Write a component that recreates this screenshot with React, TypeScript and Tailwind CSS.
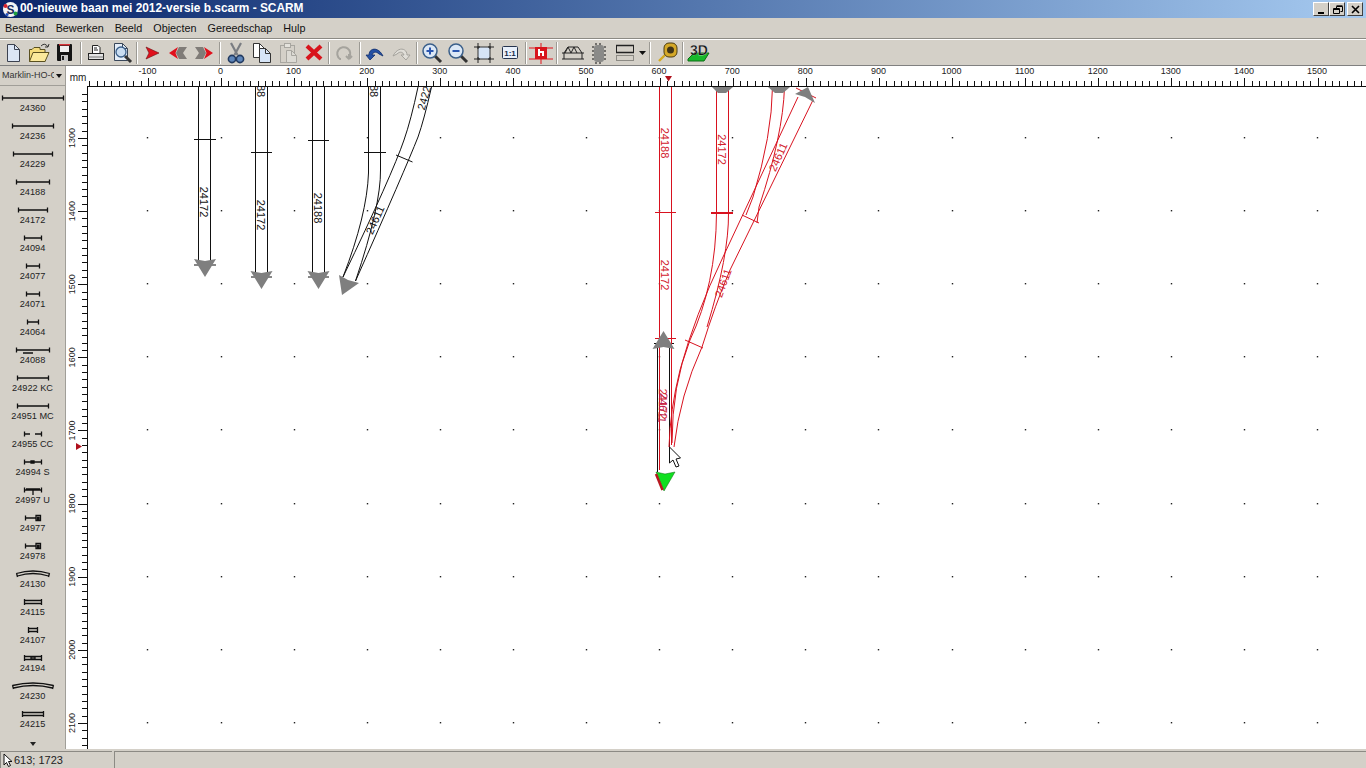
import React from 'react';

const FONT = "font-['Liberation_Sans',Arial,sans-serif]";
const RED = '#d8121f';
const GRAY = '#7f7f7f';

// palette shape helpers
const bar = (a: number, b: number) => `M${a} 1.5V6.5M${b} 1.5V6.5M${a} 4H${b}`;
const twin = (a: number, b: number) => `M${a} 1V7M${b} 1V7M${a} 2.5H${b}M${a} 5.5H${b}`;
const arc = (a: number, b: number) =>
  `M${a} 3L${a + 1} 7M${b} 3L${b - 1} 7M${a} 3.5Q33 -1.5 ${b} 3.5M${a + 1} 6Q33 1 ${b - 1} 6`;

const paletteItems = [
  { label: '24360', d: bar(2.5, 63.5) },
  { label: '24236', d: bar(12.5, 53.5) },
  { label: '24229', d: bar(13.5, 52.5) },
  { label: '24188', d: bar(16.5, 49.5) },
  { label: '24172', d: bar(18.5, 47.5) },
  { label: '24094', d: bar(24.5, 41.5) },
  { label: '24077', d: bar(26.5, 39.5) },
  { label: '24071', d: bar(26.5, 39.5) },
  { label: '24064', d: bar(27.5, 38.5) },
  { label: '24088', d: bar(16.5, 49.5) + 'M23 7H33' },
  { label: '24922 KC', d: bar(17.5, 48.5) },
  { label: '24951 MC', d: bar(17.5, 48.5) },
  { label: '24955 CC', d: 'M24.5 1.5V6.5M41.5 1.5V6.5M24.5 4H30M35 4H41.5' },
  { label: '24994 S', d: bar(24.5, 41.5) + 'M31 3H34V5H31Z' },
  { label: '24997 U', d: bar(24.5, 41.5) + 'M26 3H40M33 4V9' },
  { label: '24977', d: bar(25.5, 36) + 'M36 1.5H40.5V6.5H36ZM37.5 3.5H39V5H37.5Z' },
  { label: '24978', d: bar(25.5, 36) + 'M36 1.5H40.5V6.5H36ZM37.5 3.5H39V5H37.5Z' },
  { label: '24130', d: arc(16.5, 49.5) },
  { label: '24115', d: twin(24.5, 41.5) },
  { label: '24107', d: twin(28.5, 37.5) },
  { label: '24194', d: twin(24.5, 41.5) + 'M31 3H35V5H31Z' },
  { label: '24230', d: arc(12.5, 53.5) },
  { label: '24215', d: twin(22.5, 43.5) },
];

const menus = ['Bestand', 'Bewerken', 'Beeld', 'Objecten', 'Gereedschap', 'Hulp'];

const Sep = ({ className }: { className: string }) => (
  <div className={`flex justify-center h-full items-center ${className}`}>
    <div className="h-[22px] w-[2px] border-l border-r border-l-[#9c9a94] border-r-white" />
  </div>
);

const Btn = ({ children }: { children: React.ReactNode }) => (
  <div className="w-[26px] h-full flex items-center justify-center">
    <svg width="24" height="24" viewBox="0 0 24 24">
      {children}
    </svg>
  </div>
);

const Doc = ({ x, y, w, h, fill, stroke }: { x: number; y: number; w: number; h: number; fill: string; stroke: string }) => (
  <g>
    <path d={`M${x} ${y}H${x + w - 5}L${x + w} ${y + 5}V${y + h}H${x}Z`} fill={fill} stroke={stroke} />
    <path d={`M${x + w - 5} ${y}V${y + 5}H${x + w}`} fill="none" stroke={stroke} />
  </g>
);

const Lens = ({ sign }: { sign?: '+' | '-' }) => (
  <g>
    <path d="M15 15L21 21" stroke="#333" strokeWidth="3" />
    <circle cx="10" cy="10" r="7" fill="#dce8f6" stroke="#3a5f8a" strokeWidth="1.5" />
    {sign && <path d="M6.5 10H13.5" stroke="#2a56b0" strokeWidth="2" />}
    {sign === '+' && <path d="M10 6.5V13.5" stroke="#2a56b0" strokeWidth="2" />}
  </g>
);

const Toolbar = () => (
  <div className="h-[26px] flex items-center shrink-0 border-b border-[#808080]">
    <Btn><Doc x={6.5} y={3.5} w={12} h={17} fill="#dce6f5" stroke="#3c4250" /></Btn>
    <Btn>
      <path d="M2.5 20.5V8.5H5L7 6.5H13V8.5H18V20.5Z" fill="#f5dc7c" stroke="#5a5020" />
      <path d="M2.5 20.5L6 11.5H22L18 20.5Z" fill="#fbe99c" stroke="#5a5020" />
      <path d="M14 5Q18 1 21 6M21 6L22 3M21 6L18 6" fill="none" stroke="#333" />
    </Btn>
    <Btn>
      <rect x="4" y="3" width="15" height="17" rx="1" fill="#141414" />
      <rect x="6" y="3" width="11" height="1.5" fill="#d8343a" />
      <rect x="7" y="5" width="9" height="6" fill="#f0f0f0" />
      <rect x="8" y="14" width="7" height="6" fill="#c8c8c8" />
      <rect x="9" y="15" width="2" height="4" fill="#222" />
    </Btn>
    <Sep className="w-[5px]" />
    <Btn>
      <path d="M8.5 4.5H14L16 6.5V12.5H8.5Z" fill="#fff" stroke="#222" />
      <path d="M10 7H13M10 9H14" stroke="#222" />
      <rect x="4.5" y="12.5" width="15" height="6" fill="#e4e4e4" stroke="#222" />
      <path d="M4.5 16H19.5" stroke="#777" />
    </Btn>
    <Btn>
      <Doc x={4.5} y={2.5} w={13} h={17} fill="#e4edf8" stroke="#39475a" />
      <path d="M15 15L21 21" stroke="#333" strokeWidth="3" />
      <circle cx="11" cy="11" r="5" fill="#c9ddf2" stroke="#3a5f8a" strokeWidth="1.3" />
    </Btn>
    <Sep className="w-[4px]" />
    <Btn>
      <path d="M6 6L19 12L6 18L9 12Z" fill="#e0101c" stroke="#6a0f12" strokeWidth=".6" />
    </Btn>
    <Btn>
      <path d="M13 6L21 6L17 12L21 18L13 18L10 12Z" fill="#807c78" />
      <path d="M12 6L3 12L12 18L9.5 12Z" fill="#e0101c" />
    </Btn>
    <Btn>
      <path d="M11 6L3 6L7 12L3 18L11 18L14 12Z" fill="#807c78" />
      <path d="M12 6L21 12L12 18L14.5 12Z" fill="#e0101c" />
    </Btn>
    <Sep className="w-[6px]" />
    <Btn>
      <path d="M7 2L13.5 14M17 2L10.5 14" stroke="#7a7d82" strokeWidth="2.2" />
      <circle cx="8" cy="18" r="3.6" fill="#5e86ba" stroke="#223a60" strokeWidth="1.6" />
      <circle cx="16" cy="18" r="3.6" fill="#5e86ba" stroke="#223a60" strokeWidth="1.6" />
    </Btn>
    <Btn>
      <Doc x={3.5} y={2.5} w={11} h={14} fill="#fff" stroke="#333" />
      <Doc x={9.5} y={7.5} w={11} h={14} fill="#d6e4f6" stroke="#333" />
    </Btn>
    <Btn>
      <rect x="4.5" y="4.5" width="14" height="17" fill="#d4d0c8" stroke="#a8a6a0" />
      <rect x="8.5" y="2.5" width="6" height="4" fill="#e4e2dc" stroke="#a8a6a0" />
      <Doc x={10.5} y={9.5} w={10} h={12} fill="#dcdad4" stroke="#a8a6a0" />
    </Btn>
    <Btn>
      <path d="M5 5L19 18M19 5L5 18" stroke="#d8141c" strokeWidth="4.2" />
    </Btn>
    <Sep className="w-[4px]" />
    <Btn>
      <path d="M9 18H8A6.5 6.5 0 1 1 17 16.5V13M17 18L14 15M17 18L20 15" fill="none" stroke="#a5a39d" strokeWidth="2" />
    </Btn>
    <Sep className="w-[5px]" />
    <Btn>
      <path d="M6 14C6 7 15 5 20 15L16 13C13 10 10 11 9 14L12 14L7 19L3 14Z" fill="#2450a4" stroke="#14306a" strokeWidth=".8" />
    </Btn>
    <Btn>
      <path d="M18 14C18 7 9 5 4 15L8 13C11 10 14 11 15 14L12 14L17 19L21 14Z" fill="#e0ded8" stroke="#a5a39d" />
    </Btn>
    <Sep className="w-[5px]" />
    <Btn><Lens sign="+" /></Btn>
    <Btn><Lens sign="-" /></Btn>
    <Btn>
      <rect x="6" y="6" width="12" height="12" fill="#d6e4f6" stroke="#333" />
      <path d="M2 6H8M16 6H22M2 18H8M16 18H22M6 2V8M18 2V8M6 16V22M18 16V22" stroke="#222" />
    </Btn>
    <Btn>
      <rect x="4.5" y="5.5" width="15" height="12" rx="1" fill="#e8f0fb" stroke="#26344e" />
      <text x="12" y="14.5" textAnchor="middle" fontSize="8" fontWeight="700" fontFamily="Liberation Sans" fill="#1a2a48">1:1</text>
    </Btn>
    <Sep className="w-[5px]" />
    <Btn>
      <path d="M0 7H24M0 18H24M12 2V23" stroke="#e0141c" />
      <rect x="6" y="6" width="12" height="12" fill="#d8141c" />
      <path d="M10 8V15M10 11H14V15" stroke="#fff" strokeWidth="2" fill="none" />
    </Btn>
    <Sep className="w-[6px]" />
    <Btn>
      <path d="M1 12H23M1 18H23M3 18V12M21 18V12M3 12L7 6H17L21 12M7 6L10 12L13 6L16 12M4 12L7 6" fill="none" stroke="#222" />
    </Btn>
    <Btn>
      <rect x="7" y="4" width="10" height="17" rx="3" fill="#8a8a88" />
      <path d="M6 5V21M18 5V21M8 3H16M8 22H16" stroke="#111" strokeDasharray="2 2" />
    </Btn>
    <Btn>
      <path d="M3 4.5H21M3 11.5H21" stroke="#222" strokeWidth="1.4" />
      <path d="M3.5 4.5V11.5M20.5 4.5V11.5" stroke="#222" />
      <rect x="3.5" y="14.5" width="17" height="5" fill="#d4d0c8" stroke="#8c8a84" />
    </Btn>
    <div className="w-[8px] h-full flex items-center justify-center">
      <svg width="7" height="4" viewBox="0 0 7 4"><path d="M0 0H7L3.5 4Z" fill="#111" /></svg>
    </div>
    <Sep className="w-[8px]" />
    <Btn>
      <path d="M10 14L4 20" stroke="#d4aa20" strokeWidth="2.4" />
      <rect x="9" y="2" width="13" height="14" rx="5" fill="#d4a828" stroke="#4c3c10" />
      <circle cx="15.5" cy="9" r="3.5" fill="#403418" />
    </Btn>
    <Sep className="w-[5px]" />
    <Btn>
      <path d="M2 18L8 12H23L18 20H2Z" fill="#18b82a" stroke="#0c6c16" />
      <text x="13" y="14" textAnchor="middle" fontSize="14" fontWeight="700" fontFamily="Liberation Sans" fill="#101010" stroke="#fff" strokeWidth=".25">3D</text>
    </Btn>
  </div>
);

const ArrowHead = ({ x, y, rot, fill = GRAY }: { x: number; y: number; rot: number; fill?: string }) => (
  <path d="M-11 -9L0 -7L11 -9L0 9Z" transform={`translate(${x} ${y}) rotate(${rot})`} fill={fill} />
);

const Label = ({ x, y, rot = 90, color = '#111', children }: { x: number; y: number; rot?: number; color?: string; children: string }) => (
  <text
    transform={`translate(${x} ${y}) rotate(${rot})`}
    textAnchor="middle"
    dominantBaseline="central"
    fontSize="11"
    fill={color}
  >
    {children}
  </text>
);

const xOf = (v: number) => 221 + v * 0.731;
const yOf = (v: number) => 138 + (v - 1300) * 0.7312;

const xTicks: number[] = [];
for (let v = -180; v <= 1570; v += 10) xTicks.push(v);
const yTicks: number[] = [];
for (let v = 1240; v <= 2140; v += 10) yTicks.push(v);
const gridX: number[] = [];
for (let v = -100; v <= 1500; v += 100) gridX.push(v);
const gridY: number[] = [];
for (let v = 1300; v <= 2100; v += 100) gridY.push(v);

const Canvas = () => (
  <svg
    className="block flex-1 min-w-0"
    width="1300"
    height="683"
    viewBox="66 66 1300 683"
    fontFamily="Liberation Sans, Arial, sans-serif"
  >
    <rect x="66" y="66" width="1300" height="683" fill="#fff" />

    {gridX.map((gx) =>
      gridY.map((gy) => (
        <rect key={`${gx}-${gy}`} x={Math.floor(xOf(gx)) - 0.2} y={Math.round(yOf(gy)) - 1} width="1.4" height="1.4" fill="#222" />
      )),
    )}

    {/* black tracks on the left */}
    <g stroke="#111" strokeWidth="1" fill="none">
      <path d="M198.5 87V265M210.5 87V265M194 139.5H216M194 265H216" />
      <path d="M255.5 87V277M267.5 87V277M251 152.5H272M251 277H272" />
      <path d="M312.5 87V277M324.5 87V277M308 140.5H329M308 277H329" />
      <path d="M368.5 87V173Q367 215 343 277M380.5 87V170Q381 205 355.5 281M364 152.5H386" />
      <path d="M418 87Q411 120 404 140Q392 175 343 277M431.5 87Q424 120 418 137Q405 170 355.5 281M396 155L412.5 162" />
    </g>
    <Label x={204} y={202}>24172</Label>
    <Label x={261} y={215}>24172</Label>
    <Label x={318} y={208}>24188</Label>
    <Label x={261} y={91}>88</Label>
    <Label x={374} y={91}>88</Label>
    <Label x={424} y={98} rot={-74}>2422</Label>
    <Label x={375} y={220} rot={-66}>24611</Label>
    <ArrowHead x={205} y={268} rot={0} />
    <ArrowHead x={261.5} y={280} rot={0} />
    <ArrowHead x={318.5} y={280} rot={0} />
    <path d="M339 275L348 280L359 283L342 295Z" fill={GRAY} />

    {/* selected red tracks */}
    <g stroke="#111" strokeWidth="1" fill="none">
      <path d="M657.5 347V472M669.5 347V450M654 343.5H674" />
    </g>
    <g stroke={RED} strokeWidth="1" fill="none">
      <path d="M659.5 87V470M671.5 87V445M655 212.5H676M655 338.5H676" />
      <path d="M716.5 87V213Q716 285 690 340Q672 385 672 443" />
      <path d="M728.5 87V213Q729 255 707 327" />
      <path d="M772.5 87Q772 135 753 197L746 215" />
      <path d="M784.5 87Q783 135 759 207L757 223" />
      <path d="M798 97L723 257Q695 315 680 370Q670 410 669 447" />
      <path d="M813 100L730 270Q715 305 702 347Q680 395 674 447" />
      <path d="M742 215L759 223M685 340L703 348M796 88L816 98" />
    </g>
    <path d="M711 213H733" stroke={RED} strokeWidth="2" />
    <Label x={664.5} y={143} color="#d2202c">24188</Label>
    <Label x={664.5} y={275} color="#d2202c">24172</Label>
    <Label x={722} y={149.5} color="#d2202c">24172</Label>
    <Label x={778} y={157} rot={-66} color="#d2202c">24611</Label>
    <Label x={723} y={283} rot={-70} color="#d2202c">24611</Label>
    <Label x={663} y={404} color="#d2202c">24172</Label>
    <Label x={663} y={408} rot={94} color="#c0204c">24611</Label>

    <ArrowHead x={663.5} y={340} rot={180} />
    <path d="M712 87H733L726 93H718Z" fill={GRAY} />
    <path d="M768 87H790L783 93H775Z" fill={GRAY} />
    <path d="M795 94L808 87L815 103L805 97Z" fill={GRAY} />
    <path d="M656 472L665 474L675 472L664 491Z" fill="#10e020" stroke="#0a6a10" strokeWidth=".5" />
    <path d="M656 474L662.5 490" stroke="#b81820" strokeWidth="2.5" />

    {/* mouse pointer */}
    <path d="M669.5 447V463L673 460L676 467L679 466L676 459L680.5 458Z" fill="#fff" stroke="#111" />

    {/* rulers */}
    <rect x="66" y="66" width="1300" height="20" fill="#fff" />
    <rect x="66" y="66" width="21" height="683" fill="#fff" />
    <path d="M66 65.5H1366" stroke="#8c8a84" />
    <path d="M87.5 86V749M87 86.5H1366" stroke="#111" />
    <g stroke="#111" strokeWidth="1">
      {xTicks.map((v) => {
        const px = Math.round(xOf(v)) + 0.5;
        return px >= 87 ? <path key={v} d={`M${px} ${v % 100 === 0 ? 78 : 81}V86`} /> : null;
      })}
      {yTicks.map((v) => {
        const py = Math.round(yOf(v)) + 0.5;
        return py >= 87 ? <path key={v} d={`M${v % 100 === 0 ? 78 : 82} ${py}H87`} /> : null;
      })}
    </g>
    <g fontSize="9" fill="#222" textAnchor="middle">
      <text x="78" y="81" fontSize="10">mm</text>
      {gridX.map((v) => (
        <text key={v} x={xOf(v) - 0.5} y="74">{v}</text>
      ))}
      {gridY.map((v) => (
        <text key={v} transform={`translate(75 ${yOf(v)}) rotate(-90)`}>{v}</text>
      ))}
    </g>
    <path d="M665 76H672L668.5 81.5Z" fill="#b0101c" />
    <path d="M76 443V450L82 446.5Z" fill="#b0101c" />
  </svg>
);

export default function App() {
  return (
    <div className={`w-[1366px] h-[768px] overflow-hidden flex flex-col bg-[#d4d0c8] text-[#111] ${FONT}`}>
      {/* title bar */}
      <div className="h-[18px] shrink-0 flex items-center bg-gradient-to-r from-[#0a246a] to-[#a6caf0] pl-[2px] pr-[3px]">
        <svg width="17" height="17" viewBox="0 0 17 17" className="shrink-0">
          <circle cx="8.5" cy="8.5" r="7.5" fill="#f4f4f4" />
          <circle cx="3.5" cy="5" r="2" fill="#d8202c" />
          <circle cx="13.5" cy="12.5" r="2" fill="#20a040" />
          <circle cx="5" cy="13.5" r="1.6" fill="#2050c0" />
          <text x="8.5" y="13" textAnchor="middle" fontSize="12" fontWeight="700" fill="#1a2a5a">S</text>
        </svg>
        <span className="ml-[1px] text-white font-bold text-[11.9px] leading-none whitespace-nowrap">
          00-nieuwe baan mei 2012-versie b.scarm - SCARM
        </span>
        <div className="ml-auto flex">
          {[
            <path key="min" d="M3 10H9" stroke="#000" strokeWidth="2" />,
            <path key="max" d="M5.5 3.5H11.5V8.5H9.5M5.5 3.5V5.5M2.5 5.5H8.5V10.5H2.5ZM2.5 6.5H8.5M5.5 2.8H11.5" stroke="#000" fill="none" />,
            <path key="close" d="M3 3L10 10M10 3L3 10" stroke="#000" strokeWidth="1.6" />,
          ].map((glyph, i) => (
            <div
              key={i}
              className={`w-[16px] h-[14px] bg-[#d4d0c8] border border-t-white border-l-white border-r-[#404040] border-b-[#404040] flex items-center justify-center ${i === 1 ? 'mr-[2px]' : ''}`}
            >
              <svg width="13" height="12" viewBox="0 0 13 12">{glyph}</svg>
            </div>
          ))}
        </div>
      </div>

      {/* menu */}
      <div className="h-[21px] shrink-0 flex items-center gap-[11px] pl-[5px] text-[10.8px] border-b border-[#8c8a84]">
        {menus.map((m) => (
          <span key={m}>{m}</span>
        ))}
      </div>
      <div className="h-px bg-white shrink-0" />

      <Toolbar />

      {/* body */}
      <div className="flex-1 min-h-0 flex">
        <div className="w-[66px] shrink-0 flex flex-col border-r border-[#a09e98] overflow-hidden">
          <div className="h-[20px] shrink-0 flex items-center px-[2px] text-[9px] text-[#333] border-b border-[#a09e98]">
            <span className="w-[52px] overflow-hidden whitespace-nowrap">Marklin-HO-C</span>
            <svg width="6" height="4" viewBox="0 0 6 4" className="ml-[2px]"><path d="M0 0H6L3 4Z" fill="#111" /></svg>
          </div>
          <div className="h-[8px] shrink-0" />
          {paletteItems.map((it) => (
            <div key={it.label} className="h-[28px] shrink-0 flex flex-col items-center">
              <svg width="65" height="8" viewBox="0 0 65 8" className="overflow-visible">
                <path d={it.d} fill="none" stroke="#111" strokeWidth="1.3" />
              </svg>
              <span className="text-[9.2px] leading-[12px] text-[#222] whitespace-nowrap">{it.label}</span>
            </div>
          ))}
          <div className="flex justify-center pt-[4px]">
            <svg width="6" height="4" viewBox="0 0 6 4"><path d="M0 0H6L3 4Z" fill="#222" /></svg>
          </div>
        </div>
        <Canvas />
      </div>

      {/* status bar */}
      <div className="h-[19px] shrink-0 flex gap-[2px] pt-[2px] text-[11px] text-[#222]">
        <div className="w-[112px] border-t border-l border-[#8c8a84] flex items-center pl-[2px] gap-[1px]">
          <svg width="10" height="14" viewBox="0 0 10 14"><path d="M1 1V12L3.5 9.5L5.5 13.5L7.5 12.5L5.5 8.5H9Z" fill="#fff" stroke="#111" /></svg>
          <span className="leading-none">613; 1723</span>
        </div>
        <div className="flex-1 border-t border-l border-[#8c8a84]" />
      </div>
    </div>
  );
}
